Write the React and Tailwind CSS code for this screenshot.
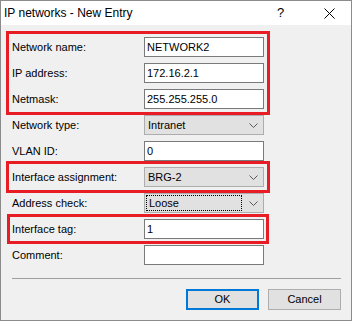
import React from "react";

const font = { fontFamily: '"Liberation Sans", Arial, sans-serif' };

function Chevron() {
  return (
    <svg width="9" height="5" viewBox="0 0 9 5" className="shrink-0">
      <polyline points="0.5,0.5 4.5,4.5 8.5,0.5" fill="none" stroke="#5a5a5a" strokeWidth="1" />
    </svg>
  );
}

function TextBox({ value }) {
  return (
    <div className="h-[20px] w-[120px] border border-[#7a7a7a] bg-white flex items-center pl-[2px] text-[11px] text-black">
      {value}
    </div>
  );
}

function Combo({ value, focused }) {
  return (
    <div className="h-[20px] w-[120px] border border-[#adadad] bg-[#e1e1e1] flex items-center pr-[5px] text-[11px] text-black">
      {focused ? (
        <div className="flex-1 h-[16px] ml-[1px] mr-[7px] border border-dotted border-black flex items-center pl-[2px]">
          {value}
        </div>
      ) : (
        <div className="flex-1 pl-[3px]">{value}</div>
      )}
      <Chevron />
    </div>
  );
}

function Row({ label, children }) {
  return (
    <div className="flex items-center h-[20px]">
      <div className="w-[132px] text-[11px] text-black">{label}</div>
      {children}
    </div>
  );
}

export default function App() {
  return (
    <div className="w-[353px] h-[321px] bg-white" style={font}>
      <div className="w-[352px] h-[321px] border border-[#8c8c8c] bg-[#f0f0f0] flex flex-col">
        {/* title bar */}
        <div className="h-[24px] bg-white flex items-center pl-[3px] text-[12px] text-black">
          <span className="flex-1">IP networks - New Entry</span>
          <span className="w-[10px] text-[13px] mr-[37px]">?</span>
          <svg width="11" height="11" viewBox="0 0 11 11" className="mr-[16px]">
            <path d="M0.5 0.5 L10.5 10.5 M10.5 0.5 L0.5 10.5" stroke="#000" strokeWidth="1" />
          </svg>
        </div>

        {/* body */}
        <div className="flex-1 pl-[11px] pr-[10px] pt-[12px] flex flex-col">
          <div className="flex flex-col gap-[6px]">
            <div className="flex flex-col gap-[6px] w-[252px] outline-3 outline-[#e81c25] outline-offset-3">
              <Row label="Network name:"><TextBox value="NETWORK2" /></Row>
              <Row label="IP address:"><TextBox value="172.16.2.1" /></Row>
              <Row label="Netmask:"><TextBox value="255.255.255.0" /></Row>
            </div>
            <Row label="Network type:"><Combo value="Intranet" /></Row>
            <Row label="VLAN ID:"><TextBox value="0" /></Row>
            <div className="w-[252px] outline-3 outline-[#e81c25] outline-offset-3">
              <Row label="Interface assignment:"><Combo value="BRG-2" /></Row>
            </div>
            <Row label="Address check:"><Combo value="Loose" focused /></Row>
            <div className="w-[252px] outline-3 outline-[#e81c25] outline-offset-2">
              <Row label="Interface tag:"><TextBox value="1" /></Row>
            </div>
            <Row label="Comment:"><TextBox value="" /></Row>
          </div>

          <div className="mt-[13px] border-t border-[#a0a0a0]" />

          <div className="mt-[10px] flex justify-end gap-[9px]">
            <button className="w-[73px] h-[21px] border-2 border-[#0078d7] bg-[#e1e1e1] text-[11px] text-black flex items-center justify-center">
              OK
            </button>
            <button className="w-[73px] h-[21px] border border-[#adadad] bg-[#e1e1e1] text-[11px] text-black flex items-center justify-center">
              Cancel
            </button>
          </div>
        </div>
      </div>
    </div>
  );
}
